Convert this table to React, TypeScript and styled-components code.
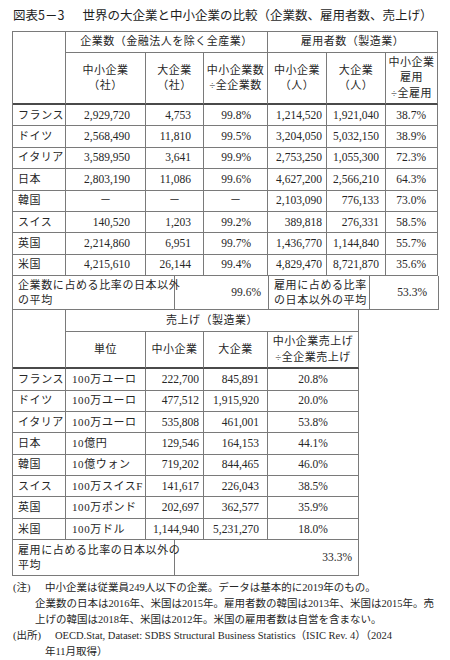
import React from 'react'
import styled, { createGlobalStyle } from 'styled-components'

const GlobalStyle = createGlobalStyle`
  body {
    margin: 0;
    background: #ffffff;
    color: #262626;
    font-family: 'Liberation Serif', 'Noto Sans CJK JP', serif;
  }
`

const LINE = '#7a7a7a'
const THICK = '#4a4a4a'

const Page = styled.div`
  width: 450px;
  padding-top: 7px;
`

const Title = styled.h1`
  display: flex;
  gap: 18px;
  margin: 0 0 8px 13px;
  height: 16px;
  font-family: 'Noto Sans CJK JP', sans-serif;
  font-size: 12.5px;
  line-height: 16px;
  font-weight: 400;
  color: #1e1e1e;
  white-space: nowrap;
`

const Table = styled.div<{ $width: number; $top?: boolean }>`
  width: ${(p) => p.$width}px;
  margin-left: 12px;
  border-left: 1px solid ${LINE};
  border-top: ${(p) => (p.$top ? `1px solid ${LINE}` : 'none')};
  box-sizing: border-box;
  font-size: 11.5px;
`

const HeadGrid = styled.div<{ $cols: string; $rows: string }>`
  display: grid;
  grid-template-columns: ${(p) => p.$cols};
  grid-template-rows: ${(p) => p.$rows};
`

const HeadCell = styled.div<{ $col?: string; $row?: string; $thick?: boolean }>`
  grid-column: ${(p) => p.$col || 'auto'};
  grid-row: ${(p) => p.$row || 'auto'};
  display: flex;
  align-items: center;
  justify-content: center;
  text-align: center;
  border-right: 1px solid ${LINE};
  border-bottom: ${(p) => (p.$thick ? `2px solid ${THICK}` : `1px solid ${LINE}`)};
  box-sizing: border-box;
  font-size: 11px;
  line-height: 15.5px;
  letter-spacing: 0.5px;
`

const Row = styled.div<{ $cols: string; $height: number }>`
  display: grid;
  grid-template-columns: ${(p) => p.$cols};
  height: ${(p) => p.$height}px;
`

const Cell = styled.div<{ $align: 'left' | 'right' | 'center'; $pad: number }>`
  display: flex;
  align-items: center;
  justify-content: ${(p) =>
    p.$align === 'left' ? 'flex-start' : p.$align === 'right' ? 'flex-end' : 'center'};
  padding: ${(p) => (p.$align === 'left' ? `0 0 0 ${p.$pad}px` : p.$align === 'right' ? `0 ${p.$pad}px 0 0` : '0')};
  border-right: 1px solid ${LINE};
  border-bottom: 1px solid ${LINE};
  box-sizing: border-box;
  white-space: nowrap;
  line-height: 15px;
`

const Label = styled.span`
  font-size: 11px;
  letter-spacing: 0.6px;
`

const Notes = styled.div`
  margin-top: 4px;
  font-size: 10.5px;
  line-height: 16px;
  color: #262626;
`

const NoteLine = styled.div<{ $indent: number }>`
  display: flex;
  padding-left: ${(p) => p.$indent}px;
  white-space: nowrap;
`

const NoteTag = styled.span<{ $width: number }>`
  display: inline-block;
  width: ${(p) => p.$width}px;
`

type Align = ['left' | 'right' | 'center', number]

const cols1 = '53px 80px 58px 64px 59px 59px 52px'
const foot1 = '162px 94px 101px 69px'
const align1: Align[] = [
  ['left', 5],
  ['right', 15],
  ['right', 12],
  ['right', 16],
  ['right', 4],
  ['right', 6],
  ['right', 11],
]

const rows1 = [
  ['フランス', '2,929,720', '4,753', '99.8%', '1,214,520', '1,921,040', '38.7%'],
  ['ドイツ', '2,568,490', '11,810', '99.5%', '3,204,050', '5,032,150', '38.9%'],
  ['イタリア', '3,589,950', '3,641', '99.9%', '2,753,250', '1,055,300', '72.3%'],
  ['日本', '2,803,190', '11,086', '99.6%', '4,627,200', '2,566,210', '64.3%'],
  ['韓国', '－', '－', '－', '2,103,090', '776,133', '73.0%'],
  ['スイス', '140,520', '1,203', '99.2%', '389,818', '276,331', '58.5%'],
  ['英国', '2,214,860', '6,951', '99.7%', '1,436,770', '1,144,840', '55.7%'],
  ['米国', '4,215,610', '26,144', '99.4%', '4,829,470', '8,721,870', '35.6%'],
]

const cols2 = '53px 80px 58px 64px 91px'
const foot2 = '162px 184px'
const align2: Align[] = [
  ['left', 5],
  ['left', 6],
  ['right', 4],
  ['right', 8],
  ['center', 0],
]

const rows2 = [
  ['フランス', '100万ユーロ', '222,700', '845,891', '20.8%'],
  ['ドイツ', '100万ユーロ', '477,512', '1,915,920', '20.0%'],
  ['イタリア', '100万ユーロ', '535,808', '461,001', '53.8%'],
  ['日本', '10億円', '129,546', '164,153', '44.1%'],
  ['韓国', '10億ウォン', '719,202', '844,465', '46.0%'],
  ['スイス', '100万スイスF', '141,617', '226,043', '38.5%'],
  ['英国', '100万ポンド', '202,697', '362,577', '35.9%'],
  ['米国', '100万ドル', '1,144,940', '5,231,270', '18.0%'],
]

const DataRows = ({ rows, cols, align }: { rows: string[][]; cols: string; align: Align[] }) => (
  <>
    {rows.map((r) => (
      <Row key={r[0]} $cols={cols} $height={21.4}>
        {r.map((v, i) =>
          i === 0 ? (
            <Cell key={i} $align="left" $pad={align[0][1]}>
              <Label>{v}</Label>
            </Cell>
          ) : v === '－' ? (
            <Cell key={i} $align="center" $pad={0}>
              {v}
            </Cell>
          ) : (
            <Cell key={i} $align={align[i][0]} $pad={align[i][1]}>
              {align[i][0] === 'left' ? <Label>{v}</Label> : v}
            </Cell>
          )
        )}
      </Row>
    ))}
  </>
)

const App = () => {
  return (
    <Page>
      <GlobalStyle />
      <Title>
        <span>図表5－3</span>
        <span>世界の大企業と中小企業の比較（企業数、雇用者数、売上げ）</span>
      </Title>

      <Table $width={426} $top>
        <HeadGrid $cols={cols1} $rows="21px 52px">
          <HeadCell $col="1" $row="1 / 3" $thick />
          <HeadCell $col="2 / 5">企業数（金融法人を除く全産業）</HeadCell>
          <HeadCell $col="5 / 8">雇用者数（製造業）</HeadCell>
          <HeadCell $thick>中小企業<br />（社）</HeadCell>
          <HeadCell $thick>大企業<br />（社）</HeadCell>
          <HeadCell $thick>中小企業数<br />÷全企業数</HeadCell>
          <HeadCell $thick>中小企業<br />（人）</HeadCell>
          <HeadCell $thick>大企業<br />（人）</HeadCell>
          <HeadCell $thick>中小企業<br />雇用<br />÷全雇用</HeadCell>
        </HeadGrid>
        <DataRows rows={rows1} cols={cols1} align={align1} />
        <Row $cols={foot1} $height={34}>
          <Cell $align="left" $pad={5}>
            <Label>企業数に占める比率の日本以外<br />の平均</Label>
          </Cell>
          <Cell $align="right" $pad={7}>99.6%</Cell>
          <Cell $align="left" $pad={5}>
            <Label>雇用に占める比率<br />の日本以外の平均</Label>
          </Cell>
          <Cell $align="right" $pad={11}>53.3%</Cell>
        </Row>
      </Table>

      <Table $width={347}>
        <HeadGrid $cols={cols2} $rows="22px 37px">
          <HeadCell $col="1" $row="1 / 3" $thick />
          <HeadCell $col="2 / 6">売上げ（製造業）</HeadCell>
          <HeadCell $thick>単位</HeadCell>
          <HeadCell $thick>中小企業</HeadCell>
          <HeadCell $thick>大企業</HeadCell>
          <HeadCell $thick>中小企業売上げ<br />÷全企業売上げ</HeadCell>
        </HeadGrid>
        <DataRows rows={rows2} cols={cols2} align={align2} />
        <Row $cols={foot2} $height={36}>
          <Cell $align="left" $pad={5}>
            <Label>雇用に占める比率の日本以外の<br />平均</Label>
          </Cell>
          <Cell $align="right" $pad={6}>33.3%</Cell>
        </Row>
      </Table>

      <Notes>
        <NoteLine $indent={13}>
          <NoteTag $width={32}>(注)</NoteTag>
          中小企業は従業員249人以下の企業。データは基本的に2019年のもの。
        </NoteLine>
        <NoteLine $indent={35}>
          企業数の日本は2016年、米国は2015年。雇用者数の韓国は2013年、米国は2015年。売
        </NoteLine>
        <NoteLine $indent={35}>
          上げの韓国は2018年、米国は2012年。米国の雇用者数は自営を含まない。
        </NoteLine>
        <NoteLine $indent={13}>
          <NoteTag $width={42}>(出所)</NoteTag>
          OECD.Stat, Dataset: SDBS Structural Business Statistics（ISIC Rev. 4）（2024
        </NoteLine>
        <NoteLine $indent={45}>年11月取得）</NoteLine>
      </Notes>
    </Page>
  )
}

export default App
